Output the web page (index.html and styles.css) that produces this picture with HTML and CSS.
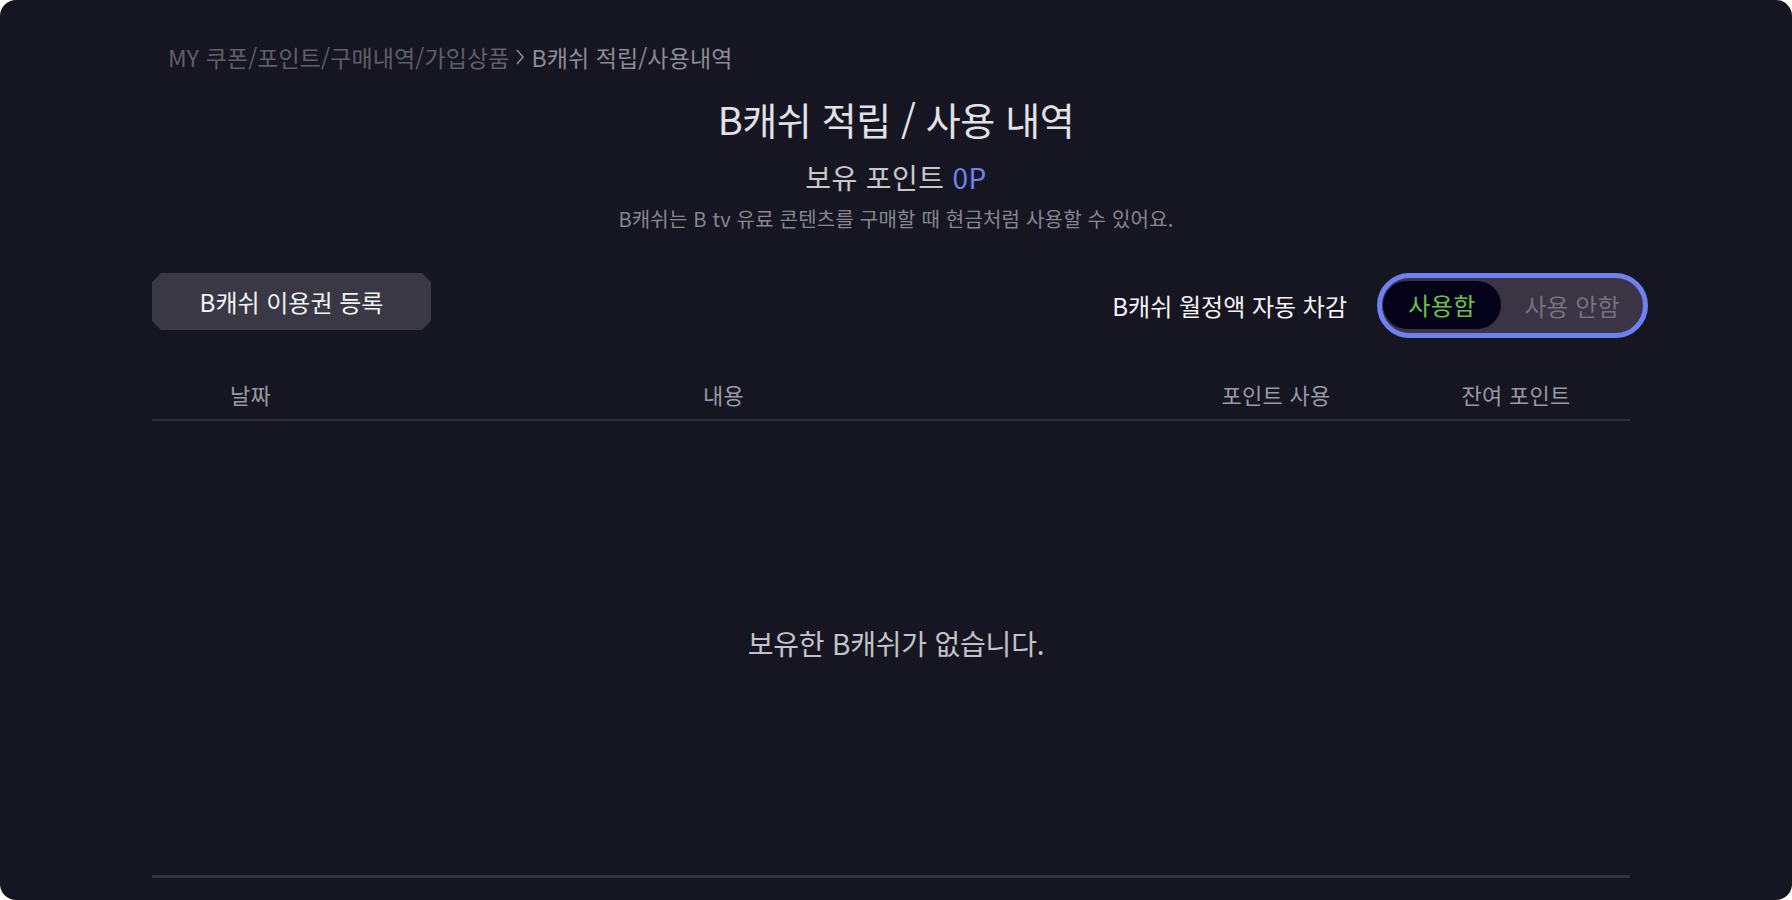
FILE: index.html
```html
<!DOCTYPE html>
<html lang="ko">
<head>
<meta charset="utf-8">
<title>B캐쉬 적립 / 사용 내역</title>
<link rel="stylesheet" href="styles.css">
</head>
<body>
<div class="page">
  <div class="breadcrumb">
    <span class="crumb-path">MY 쿠폰/포인트/구매내역/가입상품</span>
    <svg class="chev" width="12" height="20" viewBox="0 0 12 20"><path d="M3 3 L9 10 L3 17" fill="none" stroke="#8a8a92" stroke-width="1.6"/></svg>
    <span class="crumb-current">B캐쉬 적립/사용내역</span>
  </div>
  <h1 class="title">B캐쉬 적립 / 사용 내역</h1>
  <div class="points">보유 포인트 <span class="points-val">0P</span></div>
  <p class="desc">B캐쉬는 B tv 유료 콘텐츠를 구매할 때 현금처럼 사용할 수 있어요.</p>

  <div class="controls">
    <button class="reg-btn">B캐쉬 이용권 등록</button>
    <div class="auto">
      <span class="auto-label">B캐쉬 월정액 자동 차감</span>
      <div class="toggle">
        <span class="opt on">사용함</span>
        <span class="opt off">사용 안함</span>
      </div>
    </div>
  </div>

  <div class="table-head">
    <span class="th">날짜</span>
    <span class="th">내용</span>
    <span class="th">포인트 사용</span>
    <span class="th">잔여 포인트</span>
  </div>
  <div class="empty">보유한 B캐쉬가 없습니다.</div>
  <div class="bottom-line"></div>
</div>
</body>
</html>
```
FILE: styles.css
```css
* { box-sizing: border-box; }
html, body { margin: 0; padding: 0; background: #ffffff; }
body { font-family: "Noto Sans CJK KR", "Noto Sans", sans-serif; }
.page {
  width: 1792px;
  height: 900px;
  background: #161622;
  border-radius: 16px;
  overflow: hidden;
  padding: 42px 152px 0 152px;
  display: flex;
  flex-direction: column;
}
.breadcrumb {
  margin-left: 16px;
  height: 30px;
  line-height: 30px;
  font-size: 23px;
  letter-spacing: 0.1px;
  display: flex;
  align-items: center;
  gap: 5px;
}
.crumb-path { color: #5f5f68; }
.crumb-current { color: #8c8c95; }
.chev { display: block; }
.title {
  margin: 22px 0 0;
  text-align: center;
  font-size: 38px;
  line-height: 50px;
  font-weight: 400;
  color: #e2e2e6;
  letter-spacing: -0.4px;
}
.points {
  margin-top: 15px;
  text-align: center;
  font-size: 28px;
  line-height: 36px;
  font-weight: 400;
  color: #c6c6cc;
  letter-spacing: 0.4px;
}
.points-val { color: #6f80f0; }
.desc {
  margin: 10px 0 0;
  text-align: center;
  font-size: 20px;
  line-height: 28px;
  color: #86868e;
  letter-spacing: 0.2px;
}
.controls {
  margin-top: 40px;
  display: flex;
  justify-content: space-between;
  align-items: flex-start;
  margin-right: -8px;
}
.reg-btn {
  width: 279px;
  height: 57px;
  border: 0;
  background: #393844;
  color: #f2f2f4;
  font-family: inherit;
  font-size: 24px;
  font-weight: 400;
  letter-spacing: 0;
  clip-path: polygon(9px 0, calc(100% - 9px) 0, 100% 9px, 100% calc(100% - 9px), calc(100% - 9px) 100%, 9px 100%, 0 calc(100% - 9px), 0 9px);
  padding: 0;
}
.auto {
  display: flex;
  align-items: center;
  gap: 30px;
}
.auto-label {
  font-size: 24px;
  color: #f4f4f6;
  letter-spacing: 0;
  font-weight: 400;
  line-height: 65px;
}
.toggle {
  width: 271px;
  height: 65px;
  border: 5px solid #6f80f0;
  border-radius: 33px;
  background: #3a3445;
  display: flex;
  align-items: center;
  padding: 0 0 1px 1px;
}
.opt {
  font-size: 24px;
  font-weight: 400;
  letter-spacing: 0;
  text-align: center;
}
.opt.on {
  width: 118px;
  height: 48px;
  line-height: 48px;
  border-radius: 24px;
  background: #05031a;
  color: #6cc04a;
  letter-spacing: 0.5px;
}
.opt.off {
  flex: 1;
  color: #75717e;
}
.table-head {
  margin-top: 31px;
  margin-right: 10px;
  height: 52px;
  display: grid;
  grid-template-columns: 197px 749px 356px 124px 1fr;
  border-bottom: 2px solid #2f2e3c;
}
.th {
  text-align: center;
  font-size: 22px;
  line-height: 50px;
  color: #9a9aa2;
  letter-spacing: 0.3px;
  font-weight: 400;
  white-space: nowrap;
}
.empty {
  height: 454px;
  padding-top: 202px;
  text-align: center;
  font-size: 28px;
  line-height: 40px;
  color: #c2c2c8;
  letter-spacing: -0.2px;
  font-weight: 400;
}
.bottom-line {
  margin-right: 10px;
  height: 3px;
  background: #33323f;
}
```
